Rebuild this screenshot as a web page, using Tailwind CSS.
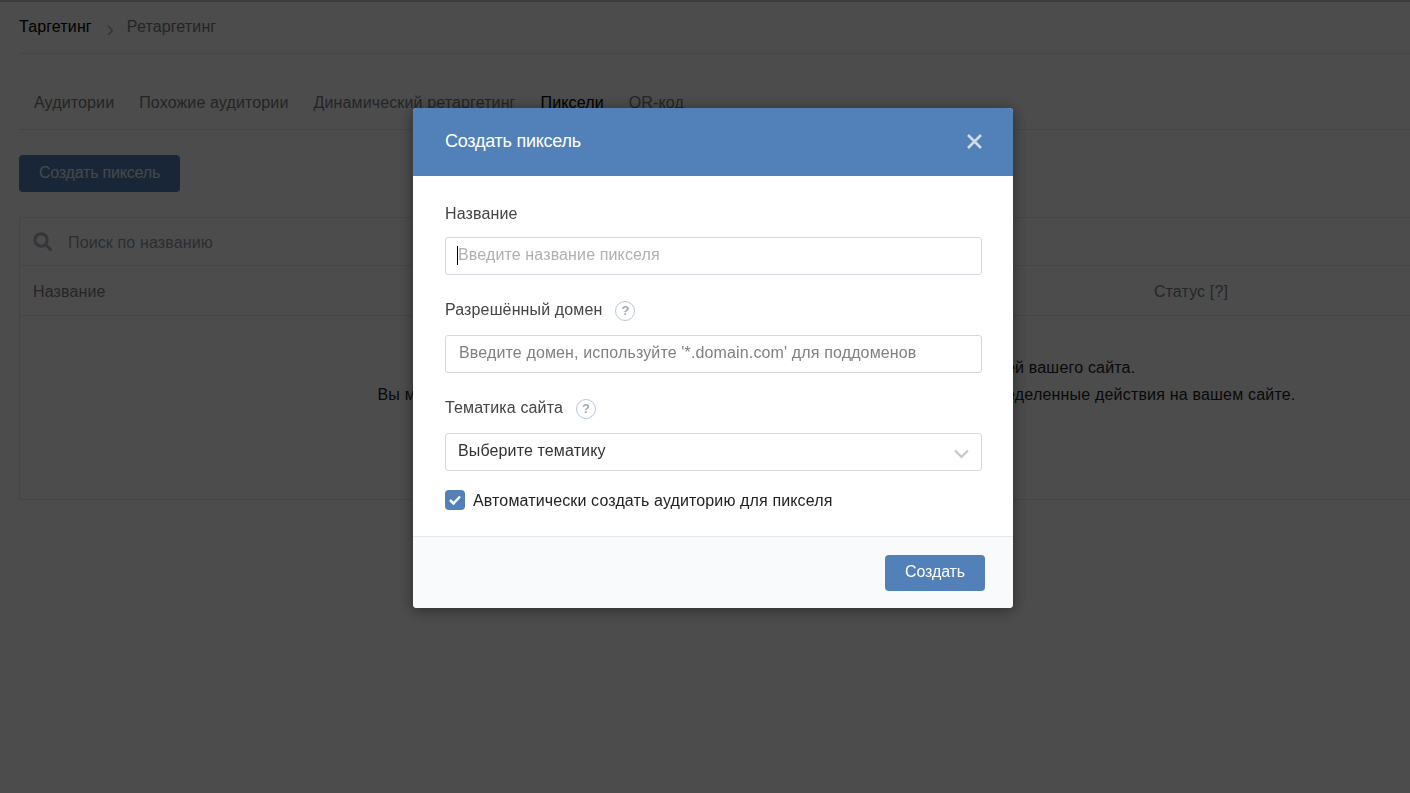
<!DOCTYPE html>
<html lang="ru">

<head>
    <meta charset="UTF-8" />
    <title>Создать пиксель</title>
    <script src="https://cdn.jsdelivr.net/npm/@tailwindcss/browser@4"></script>
</head>

<body class="bg-white h-[793px] overflow-hidden font-['Liberation_Sans',Arial,sans-serif] text-[#7a7a7a] tracking-[0.13px]">

    <div class="border-t-2 border-[#c8c8c8] pl-[19px]">
        <!-- breadcrumbs -->
        <div class="flex items-center h-[52px] pb-[2px] border-b border-[#e7e8ec] text-[16px]">
            <span class="text-black">Таргетинг</span>
            <svg class="w-[7px] h-[11px] ml-[15px] mr-[13px] mt-[7px]" viewBox="0 0 7 11" fill="none" stroke="#a0a0a0" stroke-width="1.2">
                <path d="M1 1l4.5 4.5L1 10" />
            </svg>
            <span>Ретаргетинг</span>
        </div>

        <!-- tabs -->
        <div class="flex items-center gap-[25px] h-[76px] pt-[22px] pl-[15px] border-b border-[#e7e8ec] text-[16px]">
            <span>Аудитории</span>
            <span>Похожие аудитории</span>
            <span>Динамический ретаргетинг</span>
            <span class="text-black">Пиксели</span>
            <span>QR-код</span>
        </div>

        <button class="block mt-[25px] w-[161px] h-[37px] pb-[2px] bg-[#5181b8] rounded-[4px] text-[#e8eef6] text-[16px] tracking-[-0.2px]">Создать пиксель</button>

        <!-- table -->
        <div class="w-[1635px] mt-[25px] border border-[#e7e8ec]">
            <div class="flex items-center h-[48px] pl-[13px] pt-[2px] border-b border-[#e7e8ec] text-[16px] text-[#8f98a3]">
                <svg class="w-[19px] h-[19px] mr-[16px] mb-[2px]" viewBox="0 0 19 19" fill="none" stroke="#aab4c0" stroke-width="3">
                    <circle cx="8" cy="8" r="6.2" />
                    <path d="M12.5 12.5l5 5" stroke-linecap="round" />
                </svg>
                <span>Поиск по названию</span>
            </div>
            <div class="flex items-center justify-between h-[50px] pl-[13px] pt-[2px] border-b border-[#e7e8ec] text-[16px] text-[#808080]">
                <span>Название</span>
                <span class="mr-[425px]">Статус [?]</span>
            </div>
            <div class="h-[183px] pt-[38px] text-center text-[16px] leading-[27px] text-[#222] tracking-[0.19px]">
                <p>С помощью пикселя можно собирать аудитории из посетителей вашего сайта.</p>
                <p>Вы можете добавлять в аудиторию посетителей или только тех, кто совершил определенные действия на вашем сайте.</p>
            </div>
        </div>
    </div>

    <!-- modal -->
    <div class="fixed inset-0 bg-black/70">
        <div class="absolute left-[413px] top-[108px] w-[600px] h-[500px] flex flex-col bg-white rounded-[4px] overflow-hidden shadow-[0_2px_16px_rgba(0,0,0,0.45)] text-[#444]">
            <div class="flex items-center justify-between h-[68px] shrink-0 pl-[32px] pr-[31px] bg-[#5181b8] text-white">
                <span class="text-[18px] tracking-[-0.25px] pb-[2px]">Создать пиксель</span>
                <svg class="w-[15px] h-[15px] mb-[2px]" viewBox="0 0 15 15" fill="none" stroke="#d0dcea" stroke-width="2.6">
                    <path d="M1 1l13 13M14 1L1 14" />
                </svg>
            </div>

            <div class="flex-1 pl-[32px] pr-[31px] pt-[27px] text-[16px]">
                <label class="block h-[22px] leading-[22px] mb-[12px]">Название</label>
                <div class="relative">
                    <input placeholder="Введите название пикселя"
                        class="block w-full h-[38px] px-[12px] pb-[2px] border border-[#d3d9de] rounded-[3px] text-[16px] tracking-[0.13px] placeholder:text-[#b0b0b0]" />
                    <div class="absolute left-[12px] top-[9px] w-px h-[19px] bg-black"></div>
                </div>

                <div class="flex items-center h-[22px] mt-[24px] mb-[14px]">
                    <label>Разрешённый домен</label>
                    <span class="flex items-center justify-center w-[20px] h-[20px] ml-[13px] mt-[2px] rounded-full border-[1.5px] border-[#b8c7d9] text-[13px] font-bold text-[#a0a9b3]">?</span>
                </div>
                <input placeholder="Введите домен, используйте '*.domain.com' для поддоменов"
                    class="block w-full h-[38px] px-[13px] pb-[2px] border border-[#d3d9de] rounded-[3px] text-[16px] tracking-[0.14px] placeholder:text-[#808080]" />

                <div class="flex items-center h-[22px] mt-[24px] mb-[14px]">
                    <label>Тематика сайта</label>
                    <span class="flex items-center justify-center w-[20px] h-[20px] ml-[13px] mt-[2px] rounded-full border-[1.5px] border-[#b8c7d9] text-[13px] font-bold text-[#a0a9b3]">?</span>
                </div>
                <div class="flex items-center justify-between w-full h-[38px] pl-[12px] pr-[12px] pb-[2px] border border-[#d3d9de] rounded-[3px]">
                    <span class="text-[#333]">Выберите тематику</span>
                    <svg class="w-[15px] h-[10px] mt-[5px]" viewBox="0 0 15 10" fill="none" stroke="#c5c8cc" stroke-width="2.2">
                        <path d="M1 1.5l6.5 6.5L14 1.5" />
                    </svg>
                </div>

                <div class="flex items-center h-[20px] mt-[19px]">
                    <span class="flex items-center justify-center w-[20px] h-[20px] rounded-[4px] bg-[#5181b8]">
                        <svg class="w-[12px] h-[10px]" viewBox="0 0 12 10" fill="none" stroke="#fff" stroke-width="2.5">
                            <path d="M1 5l3.5 3.5L11 1.5" />
                        </svg>
                    </span>
                    <span class="ml-[8px] mt-[1px] text-[#222]">Автоматически создать аудиторию для пикселя</span>
                </div>
            </div>

            <div class="flex items-center justify-end h-[72px] shrink-0 pr-[28px] bg-[#f9fafc] border-t border-[#e7e8ec]">
                <button class="w-[100px] h-[36px] pb-[2px] bg-[#5181b8] rounded-[4px] text-white text-[16px] tracking-[-0.1px]">Создать</button>
            </div>
        </div>
    </div>

</body>

</html>
